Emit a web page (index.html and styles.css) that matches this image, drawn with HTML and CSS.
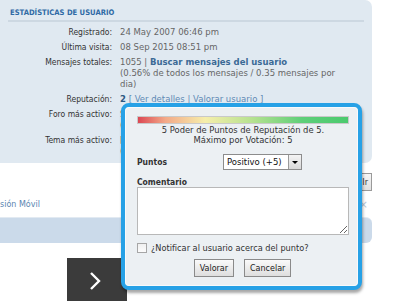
FILE: index.html
```html
<!DOCTYPE html>
<html lang="es">
<head>
    <meta charset="UTF-8">
    <title>Estadísticas de usuario</title>
    <link rel="stylesheet" href="styles.css">
</head>
<body>
    <div class="page">
        <section class="stats">
            <h3 class="stats-title">ESTADÍSTICAS DE USUARIO</h3>
            <div class="stats-list">
                <div class="stat-label">Registrado:</div>
                <div class="stat-value">24 May 2007 06:46 pm</div>

                <div class="stat-label">Última visita:</div>
                <div class="stat-value">08 Sep 2015 08:51 pm</div>

                <div class="stat-label">Mensajes totales:</div>
                <div class="stat-value">1055 | <a class="strong-link" href="#">Buscar mensajes del usuario</a><br>(0.56% de todos los mensajes / 0.35 mensajes por dia)</div>

                <div class="stat-label">Reputación:</div>
                <div class="stat-value"><b class="rep-num">2</b> <span class="link">[ Ver detalles | Valorar usuario ]</span></div>

                <div class="stat-label">Foro más activo:</div>
                <div class="stat-value">Software y Programas<br>(312 mensajes / 29.57% de los mensajes)</div>

                <div class="stat-label">Tema más activo:</div>
                <div class="stat-value">[Ayuda] Problema con el router<br>(24 mensajes / 2.27% de los mensajes)</div>
            </div>
        </section>

        <div class="footer-row">
            <span class="mobile-link">sión Móvil</span>
            <div class="edge-tools">
                <button class="edge-btn">Ir</button>
                <span class="edge-close">×</span>
            </div>
        </div>

        <div class="band"></div>

        <div class="pager">
            <svg width="16" height="20" viewBox="0 0 16 20">
                <path d="M4 2 L12 10 L4 18" fill="none" stroke="#fff" stroke-width="2.4"/>
            </svg>
        </div>

        <!-- rating popup over the profile -->
        <div class="rep-popup">
            <div class="rep-inner">
                <div class="rep-bar"></div>
                <p class="rep-power">5 Poder de Puntos de Reputación de 5.<br>Máximo por Votación: 5</p>

                <div class="rep-row">
                    <label class="rep-label">Puntos</label>
                    <div class="fake-select">
                        <span class="fake-select-text">Positivo (+5)</span>
                        <span class="fake-select-btn"><span class="arrow"></span></span>
                    </div>
                </div>

                <label class="rep-label comment-label" for="comment">Comentario</label>
                <textarea id="comment" class="rep-comment"></textarea>

                <div class="notify-row">
                    <span class="checkbox"></span>
                    <span>¿Notificar al usuario acerca del punto?</span>
                </div>

                <div class="rep-buttons">
                    <button class="rep-btn">Valorar</button>
                    <button class="rep-btn">Cancelar</button>
                </div>
            </div>
        </div>
    </div>
</body>
</html>
```

FILE: styles.css
```css
body {
    margin: 0;
    padding: 0;
    font-family: "DejaVu Sans", Verdana, sans-serif;
    font-size: 8.5px;
    background: #fff;
    overflow: hidden;
}

.page {
    position: relative;
    width: 400px;
    height: 301px;
    overflow: hidden;
}

.stats {
    width: 372px;
    box-sizing: border-box;
    background-color: #e0e9f1;
    border-radius: 0 7px 7px 0;
    padding: 8px 8px 8px 8px;
    height: 163px;
}

.stats-title {
    margin: 0;
    padding: 0 0 2px 2px;
    font-family: "DejaVu Sans Condensed", "DejaVu Sans", sans-serif;
    font-stretch: condensed;
    font-size: 7.6px;
    line-height: 10px;
    color: #2f6aa5;
    font-weight: bold;
    border-bottom: 2px solid #cdd8e2;
}

.stats-list {
    display: grid;
    grid-template-columns: 104px 230px;
    column-gap: 8px;
    row-gap: 4px;
    margin-top: 5px;
    line-height: 11px;
}

.stat-label {
    text-align: right;
    color: #333;
    font-family: "DejaVu Sans Condensed", "DejaVu Sans", sans-serif;
    font-stretch: condensed;
}

.stat-value {
    color: #666;
}

.strong-link {
    color: #3b6a96;
    font-weight: bold;
    text-decoration: none;
}

.rep-num {
    color: #2d5882;
}

.link {
    color: #5f8ab5;
}

.footer-row {
    width: 372px;
    height: 54px;
    display: flex;
    justify-content: space-between;
}

.mobile-link {
    align-self: flex-end;
    margin-bottom: 7px;
    font-size: 8px;
    color: #5a86b1;
    line-height: 10px;
}

.edge-tools {
    display: flex;
    flex-direction: column;
    align-items: flex-end;
    padding-top: 10px;
}

.edge-btn {
    font-family: inherit;
    font-size: 8px;
    height: 18px;
    padding: 0 3px 0 30px;
    border: 1px solid #9a9a9a;
    background: linear-gradient(#f6f6f6, #e1e1e1);
    color: #333;
}

.edge-close {
    color: #b8c8d8;
    font-size: 11px;
    line-height: 12px;
    margin-top: 8px;
    margin-right: 4px;
}

.band {
    width: 372px;
    height: 26px;
    background-color: #cbdaea;
    border-top: 1px solid #e2eaf2;
    border-radius: 0 6px 6px 0;
    box-sizing: border-box;
}

.pager {
    margin: 15px 0 0 67px;
    width: 60px;
    height: 43px;
    background-color: #3b3b3b;
    display: flex;
    align-items: center;
    padding-left: 20px;
    box-sizing: border-box;
}

.pager svg {
    margin-top: 2px;
}

.rep-popup {
    position: absolute;
    left: 121px;
    top: 103px;
    width: 241px;
    height: 187px;
    box-sizing: border-box;
    border: 4px solid #27a1e6;
    border-radius: 8px;
    background-color: #ecf0f3;
    box-shadow: 1px 3px 3px rgba(0, 0, 0, 0.35);
}

.rep-inner {
    height: 100%;
    box-sizing: border-box;
    border: 1px solid #f8fafb;
    border-radius: 4px;
    padding: 8px 8px 0 11px;
    font-size: 8.4px;
}

.rep-bar {
    height: 8px;
    border: 1px solid #c9c9c9;
    box-sizing: border-box;
    background: linear-gradient(to right, #dc4753 0%, #f3a988 13%, #f6eeab 32%, #b4e18f 55%, #5fcf79 78%, #4bca6e 100%);
}

.rep-power {
    margin: 1px 0 0 0;
    text-align: center;
    line-height: 10px;
    color: #333;
}

.rep-row {
    display: flex;
    align-items: center;
    margin-top: 9px;
}

.rep-label {
    display: block;
    font-family: "DejaVu Sans Condensed", "DejaVu Sans", sans-serif;
    font-stretch: condensed;
    font-size: 8.5px;
    font-weight: bold;
    color: #333;
    line-height: 10px;
}

.rep-row .rep-label {
    width: 86px;
}

.fake-select {
    display: flex;
    width: 79px;
    height: 16px;
    box-sizing: border-box;
    border: 1px solid #8c8c8c;
    background: #fff;
}

.fake-select-text {
    flex: 1;
    padding-left: 3px;
    font-size: 8.5px;
    line-height: 14px;
    color: #111;
    white-space: nowrap;
}

.fake-select-btn {
    width: 12px;
    border-left: 1px solid #9a9a9a;
    background: linear-gradient(#f4f4f4, #d8d8d8);
    display: flex;
    align-items: center;
    justify-content: center;
}

.arrow {
    width: 0;
    height: 0;
    border-left: 3px solid transparent;
    border-right: 3px solid transparent;
    border-top: 3px solid #000;
}

.comment-label {
    margin-top: 7px;
}

.rep-comment {
    display: block;
    width: 212px;
    height: 48px;
    box-sizing: border-box;
    margin: 0;
    border: 1px solid #b8b8b8;
    background: #fff;
    resize: vertical;
}

.notify-row {
    display: flex;
    align-items: center;
    gap: 4px;
    margin-top: 8px;
    font-size: 8.2px;
    color: #333;
    line-height: 10px;
    white-space: nowrap;
}

.checkbox {
    width: 10px;
    height: 10px;
    box-sizing: border-box;
    border: 1px solid #a6a6a6;
    background: linear-gradient(#f0f0f0, #fcfcfc);
}

.rep-buttons {
    display: flex;
    justify-content: center;
    gap: 10px;
    margin-top: 6px;
    padding-right: 1px;
}

.rep-btn {
    font-family: inherit;
    font-size: 8px;
    height: 18px;
    padding: 0 5px;
    border: 1px solid #8a8a8a;
    background: linear-gradient(#fafafa, #dedede);
    color: #222;
}
```
